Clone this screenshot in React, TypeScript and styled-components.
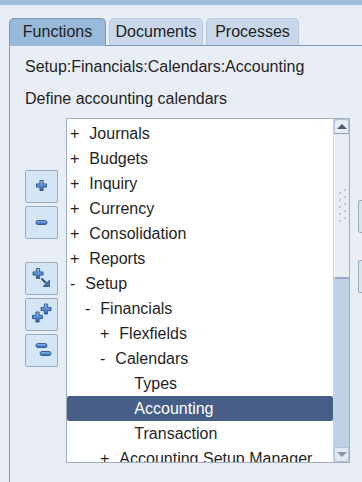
import React from "react";
import styled, { createGlobalStyle } from "styled-components";

const GlobalStyle = createGlobalStyle`
  html, body {
    margin: 0;
    padding: 0;
    width: 362px;
    height: 482px;
    overflow: hidden;
    background: #e9eef6;
    font-family: "Liberation Sans", Arial, sans-serif;
    color: #1f1f1f;
  }
`;

type Node = { label: string; level: number; marker?: "+" | "-"; selected?: boolean };

const nodes: Node[] = [
  { label: "Journals", level: 1, marker: "+" },
  { label: "Budgets", level: 1, marker: "+" },
  { label: "Inquiry", level: 1, marker: "+" },
  { label: "Currency", level: 1, marker: "+" },
  { label: "Consolidation", level: 1, marker: "+" },
  { label: "Reports", level: 1, marker: "+" },
  { label: "Setup", level: 1, marker: "-" },
  { label: "Financials", level: 2, marker: "-" },
  { label: "Flexfields", level: 3, marker: "+" },
  { label: "Calendars", level: 3, marker: "-" },
  { label: "Types", level: 4 },
  { label: "Accounting", level: 4, selected: true },
  { label: "Transaction", level: 4 },
  { label: "Accounting Setup Manager", level: 3, marker: "+" },
];

// small 3d-ish glyphs used on the tree buttons
const Plus = ({ x, y }: { x: number; y: number }) => (
  <path
    transform={`translate(${x} ${y})`}
    d="M-1.6,-5 H1.6 V-1.6 H5 V1.6 H1.6 V5 H-1.6 V1.6 H-5 V-1.6 H-1.6 Z"
    fill="url(#glyph)"
    stroke="#2a528e"
    strokeWidth="0.9"
  />
);

const Minus = ({ x, y }: { x: number; y: number }) => (
  <rect
    x={x - 5.5}
    y={y - 2}
    width="11"
    height="4"
    rx="2"
    fill="url(#glyph)"
    stroke="#2a528e"
    strokeWidth="0.9"
  />
);

const Glyph = ({ children }: { children: React.ReactNode }) => (
  <svg width="31" height="31" viewBox="-15.5 -15.5 31 31">
    <defs>
      <linearGradient id="glyph" x1="0" y1="0" x2="0" y2="1">
        <stop offset="0" stopColor="#9cc4f0" />
        <stop offset="0.5" stopColor="#5b8fd2" />
        <stop offset="1" stopColor="#3563a6" />
      </linearGradient>
    </defs>
    {children}
  </svg>
);

const GripDots = () => (
  <svg width="13" height="36" viewBox="0 0 13 36">
    {[0, 1, 2, 3, 4].map((i) => (
      <g key={i} stroke="#8aa0c4" strokeWidth="1">
        <line x1={3} y1={6 + i * 7} x2={5} y2={4 + i * 7} />
        <line x1={8} y1={3 + i * 7} x2={10} y2={1 + i * 7} />
      </g>
    ))}
  </svg>
);

const App = () => {
  return (
    <>
      <GlobalStyle />
      <TopBar />
      <Main>
        <TabRow>
          <Tab active width={97}>Functions</Tab>
          <Tab width={94}>Documents</Tab>
          <Tab width={93}>Processes</Tab>
        </TabRow>
        <Panel>
          <Crumb>Setup:Financials:Calendars:Accounting</Crumb>
          <Description>Define accounting calendars</Description>
          <ContentRow>
            <ButtonColumn>
              <ToolButton title="Expand">
                <Glyph>
                  <Plus x={0} y={-1} />
                </Glyph>
              </ToolButton>
              <ToolButton title="Collapse">
                <Glyph>
                  <Minus x={0} y={0} />
                </Glyph>
              </ToolButton>
              <ToolButton title="Expand branch" gapBefore={20}>
                <Glyph>
                  <Plus x={-3.5} y={-5} />
                  <path d="M0,0 L4.5,4.5" stroke="#2a528e" strokeWidth="2" />
                  <path d="M8,8 L8,1.5 L1.5,8 Z" fill="#3d6fb5" stroke="#2a528e" strokeWidth="0.8" />
                </Glyph>
              </ToolButton>
              <ToolButton title="Expand all">
                <Glyph>
                  <Plus x={4.5} y={-5.5} />
                  <Plus x={-4} y={2.5} />
                </Glyph>
              </ToolButton>
              <ToolButton title="Collapse all">
                <Glyph>
                  <Minus x={0} y={-5} />
                  <Minus x={4} y={3} />
                </Glyph>
              </ToolButton>
            </ButtonColumn>

            <ListBox>
              <TreeList>
                {nodes.map((n) => (
                  <TreeRow key={n.label} level={n.level} selected={n.selected}>
                    <Marker hidden={!n.marker}>{n.marker ?? "+"}</Marker>
                    {n.label}
                  </TreeRow>
                ))}
              </TreeList>
              <ScrollBar>
                <ArrowButton>
                  <ArrowUp />
                </ArrowButton>
                <Thumb>
                  <GripDots />
                </Thumb>
                <Track />
                <ArrowButton down>
                  <ArrowDown />
                </ArrowButton>
              </ScrollBar>
            </ListBox>

            <SideColumn>
              <SideButton />
              <SideButton />
            </SideColumn>
          </ContentRow>
        </Panel>
      </Main>
    </>
  );
};

const TopBar = styled.div`
  height: 5px;
  background: #9fbfdd;
`;

const Main = styled.div`
  padding: 13px 0 0 9px;
`;

const TabRow = styled.div`
  display: flex;
  align-items: flex-end;
  gap: 3px;
  height: 27px;
  border-bottom: 1px solid #7d99ba;
`;

const Tab = styled.div<{ active?: boolean; width: number }>`
  box-sizing: border-box;
  width: ${(p) => p.width}px;
  height: ${(p) => (p.active ? 28 : 27)}px;
  margin-bottom: ${(p) => (p.active ? -1 : 0)}px;
  display: flex;
  align-items: center;
  justify-content: center;
  padding-bottom: ${(p) => (p.active ? 1 : 0)}px;
  font-size: 16px;
  color: #222;
  background: ${(p) => (p.active ? "#99b9da" : "#c8d8ea")};
  border: 1px solid ${(p) => (p.active ? "#7d99ba" : "#b9cbe0")};
  border-bottom: none;
  border-radius: 5px 5px 0 0;
  position: relative;
`;

const Panel = styled.div`
  border-left: 1px solid #7d99ba;
  padding: 11px 0 0 15px;
  height: 440px;
  box-sizing: border-box;
`;

const Crumb = styled.div`
  font-size: 16px;
  line-height: 20px;
  color: #1f1f1f;
`;

const Description = styled(Crumb)`
  margin-top: 12px;
`;

const ContentRow = styled.div`
  display: flex;
  align-items: flex-start;
  margin-top: 9px;
`;

const ButtonColumn = styled.div`
  flex: none;
  display: flex;
  flex-direction: column;
  gap: 3px;
  margin: 52px 8px 0 0;
`;

const ToolButton = styled.div<{ gapBefore?: number }>`
  box-sizing: border-box;
  width: 33px;
  height: 33px;
  margin-top: ${(p) => p.gapBefore ?? 0}px;
  display: flex;
  align-items: center;
  justify-content: center;
  background: #d4e5f6;
  border: 1px solid #9ea9b9;
  border-radius: 2px;
`;

const ListBox = styled.div`
  flex: none;
  display: flex;
  width: 284px;
  height: 345px;
  box-sizing: border-box;
  border: 1px solid #a3afc0;
  background: #fff;
`;

const TreeList = styled.div`
  flex: 1;
  overflow: hidden;
  padding-top: 2px;
`;

const TreeRow = styled.div<{ level: number; selected?: boolean }>`
  height: 25px;
  line-height: 25px;
  font-size: 16px;
  white-space: nowrap;
  padding-left: ${(p) => 3 + (p.level - 1) * 15}px;
  color: ${(p) => (p.selected ? "#fff" : "#1f1f1f")};
  background: ${(p) => (p.selected ? "#475f88" : "transparent")};
  border-radius: ${(p) => (p.selected ? "2px" : "0")};
`;

const Marker = styled.span<{ hidden?: boolean }>`
  display: inline-block;
  margin-right: 10px;
  visibility: ${(p) => (p.hidden ? "hidden" : "visible")};
`;

const ScrollBar = styled.div`
  flex: none;
  width: 15px;
  display: flex;
  flex-direction: column;
  background: #bfd0e7;
  border-left: 1px solid #c6d3e6;
`;

const ArrowButton = styled.div<{ down?: boolean }>`
  box-sizing: border-box;
  height: 15px;
  display: flex;
  align-items: center;
  justify-content: center;
  background: ${(p) => (p.down ? "#e3e9f2" : "#e9eef6")};
  border: 1px solid #b3c3da;
  border-bottom-color: ${(p) => (p.down ? "#b3c3da" : "#8d9bb3")};
  border-radius: ${(p) => (p.down ? "0 0 4px 4px" : "4px 4px 0 0")};
`;

const ArrowUp = styled.div`
  width: 0;
  height: 0;
  border-left: 5px solid transparent;
  border-right: 5px solid transparent;
  border-bottom: 5px solid #4d5a76;
`;

const ArrowDown = styled.div`
  width: 0;
  height: 0;
  border-left: 5px solid transparent;
  border-right: 5px solid transparent;
  border-top: 5px solid #8a93a7;
`;

const Thumb = styled.div`
  box-sizing: border-box;
  height: 145px;
  display: flex;
  align-items: center;
  justify-content: center;
  background: #e8edf5;
  border-left: 1px solid #fff;
  border-bottom: 2px solid #97a9c4;
`;

const Track = styled.div`
  flex: 1;
`;

const SideColumn = styled.div`
  flex: none;
  display: flex;
  flex-direction: column;
  gap: 27px;
  margin: 82px 0 0 8px;
`;

const SideButton = styled.div`
  flex: none;
  width: 33px;
  height: 33px;
  box-sizing: border-box;
  background: #d4e5f6;
  border: 1px solid #9ea9b9;
  border-radius: 2px;
`;

export default App;
